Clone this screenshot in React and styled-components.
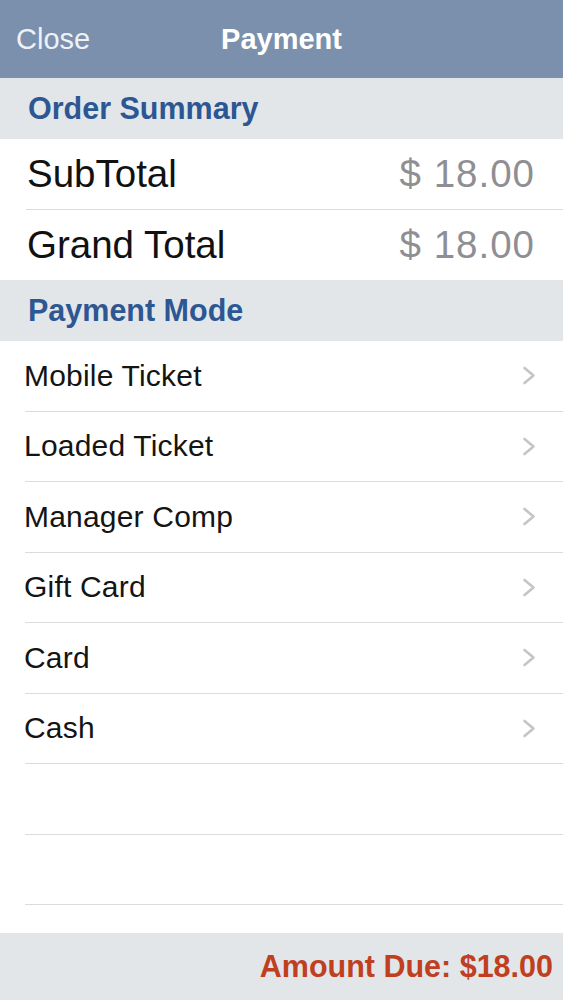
import React from 'react'
import styled, { createGlobalStyle } from 'styled-components'

const GlobalStyle = createGlobalStyle`
  html, body {
    margin: 0;
    padding: 0;
    background: #ffffff;
  }
  body {
    font-family: "Liberation Sans", Arial, sans-serif;
    -webkit-font-smoothing: antialiased;
  }
`

const modes = ['Mobile Ticket', 'Loaded Ticket', 'Manager Comp', 'Gift Card', 'Card', 'Cash', '', '']

const Chevron = () => (
  <svg width="15" height="19" viewBox="0 0 15 19" fill="none">
    <path d="M2.5 2 L11.5 9.5 L2.5 17" stroke="#c4c4c9" strokeWidth="2.6" strokeLinecap="round" strokeLinejoin="round" />
  </svg>
)

const App = () => {
  return (
    <Screen>
      <GlobalStyle />
      <NavBar>
        <NavButton>Close</NavButton>
        <NavTitle>Payment</NavTitle>
        <span />
      </NavBar>

      <Content>
        <SectionHeader>Order Summary</SectionHeader>
        <SummaryRow $divider>
          <span>SubTotal</span>
          <Amount>$ 18.00</Amount>
        </SummaryRow>
        <SummaryRow>
          <span>Grand Total</span>
          <Amount>$ 18.00</Amount>
        </SummaryRow>

        <SectionHeader>Payment Mode</SectionHeader>
        {modes.map((mode, i) => (
          <ModeRow key={i}>
            <ModeLabel>{mode}</ModeLabel>
            {mode && <Chevron />}
          </ModeRow>
        ))}
      </Content>

      <Footer>
        <AmountDue>Amount Due: $18.00</AmountDue>
      </Footer>
    </Screen>
  )
}

export default App

const Screen = styled.div`
  display: flex;
  flex-direction: column;
  height: 100vh;
  overflow: hidden;
  background: #ffffff;
`

const NavBar = styled.header`
  flex: 0 0 78px;
  display: grid;
  grid-template-columns: 1fr auto 1fr;
  align-items: center;
  padding: 0 16px 0 16px;
  background: #7b90ac;
  color: #ffffff;
  box-sizing: border-box;
`

const NavButton = styled.span`
  font-size: 29px;
  color: #eef2f7;
  justify-self: start;
`

const NavTitle = styled.span`
  font-size: 29px;
  font-weight: 700;
`

const Content = styled.main`
  flex: 1;
  overflow: hidden;
`

const SectionHeader = styled.div`
  height: 61px;
  display: flex;
  align-items: center;
  padding-left: 28px;
  background: #e3e6e9;
  color: #2d5793;
  font-size: 30.5px;
  font-weight: 700;
`

const SummaryRow = styled.div`
  height: 70.5px;
  box-sizing: border-box;
  margin-left: 26px;
  padding: 0 28px 0 1px;
  display: flex;
  align-items: center;
  justify-content: space-between;
  font-size: 38.5px;
  color: #111111;
  border-bottom: ${(p) => (p.$divider ? '1.5px solid #dcdcdf' : 'none')};
`

const Amount = styled.span`
  color: #8e8e93;
  letter-spacing: 1px;
`

const ModeRow = styled.div`
  height: 70.5px;
  box-sizing: border-box;
  margin-left: 25px;
  padding-right: 26px;
  display: flex;
  align-items: center;
  justify-content: space-between;
  border-bottom: 1.5px solid #dcdcdf;
`

const ModeLabel = styled.span`
  font-size: 30px;
  color: #141414;
  margin-left: -1px;
  letter-spacing: 0.2px;
`

const Footer = styled.footer`
  flex: 0 0 67px;
  display: flex;
  align-items: center;
  justify-content: flex-end;
  padding-right: 10px;
  background: #e3e6e9;
`

const AmountDue = styled.span`
  font-size: 30.5px;
  font-weight: 700;
  color: #bf3f1f;
`
